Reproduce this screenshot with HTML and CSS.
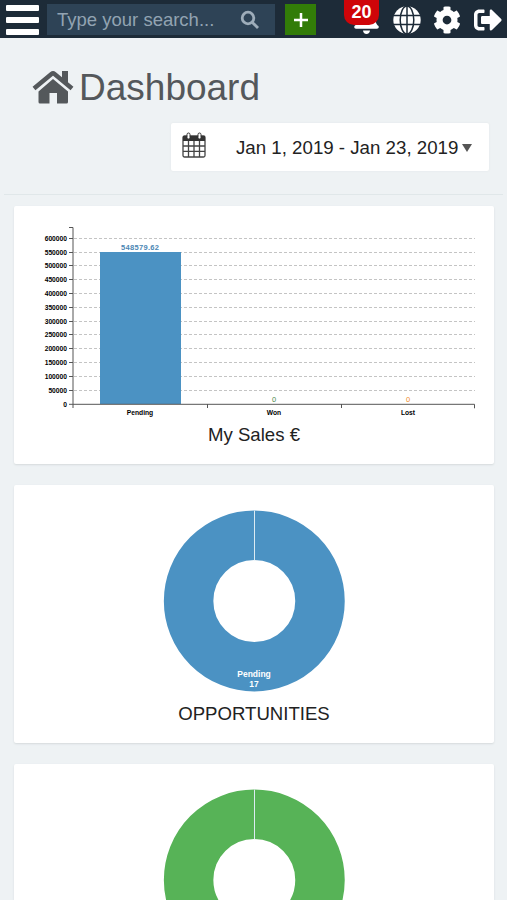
FILE: index.html
```
<!DOCTYPE html>
<html lang="en">
<head>
  <meta charset="UTF-8" />
  <meta name="viewport" content="width=device-width, initial-scale=1.0"/>
  <title>Dashboard</title>
  <link rel="stylesheet" href="styles.css">
</head>
<body>
  <header class="topbar">
    <button class="menu" aria-label="Menu"><span></span><span></span><span></span></button>
    <div class="search">
      <span class="search-text">Type your search...</span>
      <svg class="search-icon" viewBox="0 0 20 20"><circle cx="8" cy="8" r="5.8"/><path d="M12.4 12.4L18 18"/></svg>
    </div>
    <button class="add" aria-label="Add"><svg viewBox="0 0 14 14"><path d="M7 0v14M0 7h14"/></svg></button>
    <nav class="icons">
      <a class="bell">
        <svg viewBox="0 0 448 512"><path d="M224 512c35.32 0 63.97-28.65 63.97-64H160.03c0 35.35 28.65 64 63.97 64zm215.39-149.71c-19.32-20.76-55.47-51.99-55.47-154.29 0-77.7-54.48-139.9-127.94-155.16V32c0-17.67-14.32-32-31.98-32s-31.98 14.33-31.98 32v20.84C118.56 68.1 64.08 130.3 64.08 208c0 102.3-36.15 133.53-55.47 154.29-6 6.45-8.66 14.16-8.61 21.71.11 16.4 12.98 32 32.1 32h383.8c19.12 0 32-15.6 32.1-32 .05-7.55-2.61-15.27-8.61-21.71z"/></svg>
        <span class="badge">20</span>
      </a>
      <a class="globe">
        <svg viewBox="0 0 28 28"><circle cx="14" cy="14" r="13.7"/><path d="M14 0v28M0 9.5h28M0 18.5h28"/><ellipse cx="14" cy="14" rx="6.8" ry="14"/></svg>
      </a>
      <a class="cog">
        <svg viewBox="0 0 512 512"><path d="M487.4 315.7l-42.6-24.6c4.3-23.2 4.3-47 0-70.2l42.6-24.6c4.9-2.8 7.1-8.6 5.5-14-11.1-35.6-30-67.8-54.7-94.6-3.8-4.1-10-5.1-14.8-2.3L380.8 110c-17.9-15.4-38.5-27.3-60.8-35.1V25.8c0-5.6-3.9-10.5-9.4-11.7-36.7-8.2-74.3-7.8-109.2 0-5.5 1.2-9.4 6.1-9.4 11.7V75c-22.2 7.9-42.8 19.8-60.8 35.1L88.7 85.5c-4.9-2.8-11-1.9-14.8 2.3-24.7 26.7-43.6 58.9-54.7 94.6-1.7 5.4.6 11.2 5.5 14L67.3 221c-4.3 23.2-4.3 47 0 70.2l-42.6 24.6c-4.9 2.8-7.1 8.6-5.5 14 11.1 35.6 30 67.8 54.7 94.6 3.8 4.1 10 5.1 14.8 2.3l42.6-24.6c17.9 15.4 38.5 27.3 60.8 35.1v49.2c0 5.6 3.9 10.5 9.4 11.7 36.7 8.2 74.3 7.8 109.2 0 5.5-1.2 9.4-6.1 9.4-11.7v-49.2c22.2-7.9 42.8-19.8 60.8-35.1l42.6 24.6c4.9 2.8 11 1.9 14.8-2.3 24.7-26.7 43.6-58.9 54.7-94.6 1.5-5.5-.7-11.3-5.6-14.1zM256 336c-44.1 0-80-35.9-80-80s35.9-80 80-80 80 35.9 80 80-35.9 80-80 80z"/></svg>
      </a>
      <a class="logout">
        <svg viewBox="0 0 512 512"><path d="M497 273L329 441c-15 15-41 4.500-41-17v-96H152c-13.300 0-24-10.700-24-24v-96c0-13.300 10.700-24 24-24h136V88c0-21.400 25.900-32 41-17l168 168c9.300 9.400 9.300 24.600 0 34zM192 436v-40c0-6.600-5.400-12-12-12H96c-17.700 0-32-14.300-32-32V160c0-17.700 14.300-32 32-32h84c6.600 0 12-5.400 12-12V76c0-6.600-5.400-12-12-12H96c-53 0-96 43-96 96v192c0 53 43 96 96 96h84c6.600 0 12-5.400 12-12z"/></svg>
      </a>
    </nav>
  </header>

  <section class="page-head">
    <h1>
      <svg class="home" viewBox="0 0 42 34"><path class="roof" d="M2 18.500L19.500 4q1.500-1.200 3 0L40 18.500"/><path d="M30 1h6v13l-6-5z"/><path d="M21 9L36 21.500V32q0 1.500-1.500 1.500H25V23h-7.500v10.500H8Q6.500 33.500 6.500 32V21.500z"/></svg>
      <span>Dashboard</span>
    </h1>
    <div class="date-range">
      <svg class="calendar" viewBox="0 0 24 26"><rect class="frame" x="1" y="4" width="22" height="21" rx="1.500"/><path d="M1 4h22v5H1z"/><path class="lines" d="M1 14h22M1 19.300h22M6.500 9v16M12 9v16M17.500 9v16"/><rect class="ring" x="5" y="1" width="3" height="6" rx="1.500"/><rect class="ring" x="16" y="1" width="3" height="6" rx="1.500"/></svg>
      <span class="dates">Jan 1, 2019 - Jan 23, 2019</span>
      <span class="caret"></span>
    </div>
  </section>

  <main class="cards">
    <div class="card">
      <svg class="bar-chart" viewBox="0 0 480 216">
        <path class="gridline" d="M60 32.500h401M60 46.500h401M60 59.500h401M60 73.500h401M60 87.500h401M60 101.500h401M60 115.500h401M60 128.500h401M60 142.500h401M60 156.500h401M60 170.500h401M60 184.500h401"/>
        <rect class="bar" x="86" y="46" width="81" height="152"/>
        <path class="axis" d="M55 21.500h4V198M59 198.300h401.500v4M59 198v4M193.500 198v4M327.500 198v4"/>
        <path class="axis" d="M55 32.500h4M55 46.500h4M55 59.500h4M55 73.500h4M55 87.500h4M55 101.500h4M55 115.500h4M55 128.500h4M55 142.500h4M55 156.500h4M55 170.500h4M55 184.500h4M55 198.300h4"/>
        <g class="y-labels">
          <text x="53" y="34.500">600000</text>
          <text x="53" y="48.500">550000</text>
          <text x="53" y="62">500000</text>
          <text x="53" y="76">450000</text>
          <text x="53" y="90">400000</text>
          <text x="53" y="104">350000</text>
          <text x="53" y="118">300000</text>
          <text x="53" y="131">250000</text>
          <text x="53" y="145">200000</text>
          <text x="53" y="159">150000</text>
          <text x="53" y="173">100000</text>
          <text x="53" y="187">50000</text>
          <text x="53" y="200.500">0</text>
        </g>
        <g class="x-labels">
          <text x="126" y="209">Pending</text>
          <text x="260" y="209">Won</text>
          <text x="394" y="209">Lost</text>
        </g>
        <g class="values">
          <text class="blue" x="126" y="44.300" textLength="38">548579.62</text>
          <text class="green" x="260" y="196">0</text>
          <text class="orange" x="394" y="196">0</text>
        </g>
      </svg>
      <h2>My Sales €</h2>
    </div>

    <div class="card">
      <svg class="donut" viewBox="0 0 480 216">
        <circle class="ring-blue" cx="240.300" cy="116" r="65.700"/>
        <path class="split" d="M240.500 25.500v50"/>
        <text x="240" y="191.500">Pending</text>
        <text x="240" y="202">17</text>
      </svg>
      <h2>OPPORTUNITIES</h2>
    </div>

    <div class="card">
      <svg class="donut" viewBox="0 0 480 216">
        <circle class="ring-green" cx="240.300" cy="116" r="65.700"/>
        <path class="split" d="M240.500 25.500v50"/>
      </svg>
    </div>
  </main>
</body>
</html>
```
FILE: styles.css
```
* {
  box-sizing: border-box;
}

body {
  margin: 0;
  height: 900px;
  overflow: hidden;
  background: #eef2f4;
  font-family: "Liberation Sans", Arial, sans-serif;
  color: #222;
}

svg {
  display: block;
}

button {
  border: none;
  padding: 0;
}

.topbar {
  display: flex;
  height: 38px;
  padding: 4px 5px 0 6px;
  background: #1d2b38;
}

.menu {
  display: flex;
  flex-direction: column;
  gap: 6px;
  width: 33px;
  padding-top: 1px;
  background: none;
}

.menu span {
  height: 6px;
  border-radius: 1px;
  background: #fff;
}

.search {
  display: flex;
  align-items: center;
  justify-content: space-between;
  width: 228px;
  height: 31px;
  margin-left: 8px;
  padding: 0 15px 0 10px;
  background: #2e4356;
}

.search-text {
  margin-top: 1px;
  font-size: 18.5px;
  color: #92a3b2;
}

.search-icon {
  width: 20px;
  height: 20px;
  fill: none;
  stroke: #9eadba;
  stroke-width: 2.8;
}

.add {
  display: flex;
  align-items: center;
  justify-content: center;
  width: 31px;
  height: 31px;
  margin-left: 10px;
  background: #327c08;
}

.add svg {
  width: 14px;
  height: 14px;
  stroke: #fff;
  stroke-width: 2.5;
}

.icons {
  display: flex;
  align-items: center;
  gap: 13px;
  height: 32px;
  margin-left: 38px;
}

.icons svg {
  width: 28px;
  height: 28px;
  fill: #fff;
}

.icons .bell {
  position: relative;
}

.icons .bell svg {
  width: 25px;
}

.badge {
  position: absolute;
  left: -10px;
  top: -7px;
  width: 35px;
  height: 26px;
  border-radius: 0 0 10px 10px;
  background: #cf0509;
  color: #fff;
  font-size: 18px;
  font-weight: bold;
  line-height: 27px;
  text-align: center;
}

.globe {
  margin: 0 -1px 0 1px;
}

.globe path,
.globe ellipse {
  fill: none;
  stroke: #1d2b38;
  stroke-width: 1.5;
}

.page-head {
  height: 157px;
  margin: 0 4px;
  padding: 25px 14px 0 28px;
  border-bottom: 1px solid #e0e7e9;
}

h1 {
  display: flex;
  align-items: center;
  gap: 5px;
  height: 48px;
  margin: 0;
  font-size: 37px;
  font-weight: normal;
  color: #54585b;
}

h1 span {
  margin-top: 2px;
}

.home {
  width: 42px;
  height: 34px;
  margin-top: -1px;
  fill: #54585b;
}

.home .roof {
  fill: none;
  stroke: #54585b;
  stroke-width: 4.5;
}

.date-range {
  display: flex;
  align-items: center;
  width: 318px;
  height: 48px;
  margin: 12px 0 0 auto;
  padding-left: 11px;
  border-radius: 2px;
  background: #fff;
  box-shadow: 0 0 2px #dfe4e6;
}

.calendar {
  width: 24px;
  height: 26px;
  margin-top: -4px;
  fill: #333;
}

.calendar .frame,
.calendar .lines {
  fill: none;
  stroke: #444;
  stroke-width: 1.3;
}

.calendar .ring {
  fill: #fff;
  stroke: #333;
}

.dates {
  margin: 1px 0 0 30px;
  font-size: 18.7px;
}

.caret {
  margin: 2px 0 0 4px;
  border: 5.5px solid transparent;
  border-top: 8px solid #555;
  border-bottom: none;
}

.cards {
  display: flex;
  flex-direction: column;
  gap: 21px;
  padding: 11px 13px 0 14px;
}

.card {
  flex: none;
  height: 258px;
  border-radius: 2px;
  background: #fff;
  box-shadow: 0 1px 2px #d5dadc;
}

.card:last-child {
  height: 136px;
  border-radius: 2px 2px 0 0;
  overflow: hidden;
}

.card svg {
  width: 480px;
  height: 216px;
}

.card h2 {
  margin: 0;
  font-size: 18.6px;
  font-weight: normal;
  line-height: 26px;
  text-align: center;
}

.gridline {
  stroke: #c4c4c4;
  stroke-dasharray: 3 2;
}

.bar {
  fill: #4b92c3;
}

.axis {
  fill: none;
  stroke: #555;
}

.bar-chart text {
  font-size: 6.7px;
  font-weight: bold;
}

.y-labels {
  text-anchor: end;
}

.x-labels,
.values,
.donut text {
  text-anchor: middle;
}

.bar-chart .values text {
  font-size: 7.5px;
}

.blue { fill: #4b86b4; }
.bar-chart .values .green { fill: #4d8a4d; font-weight: normal; }
.bar-chart .values .orange { fill: #f08c2c; font-weight: normal; }

.donut circle {
  fill: none;
  stroke-width: 49.5;
}

.ring-blue { stroke: #4b92c3; }
.ring-green { stroke: #57b357; }

.split {
  stroke: #dcebf3;
}

.donut text {
  font-size: 8.5px;
  font-weight: bold;
  fill: #fff;
}
```
